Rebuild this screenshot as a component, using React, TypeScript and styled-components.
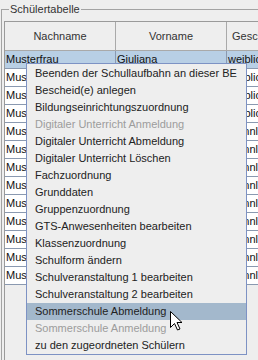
import React from 'react';
import styled, { createGlobalStyle } from 'styled-components';

const Global = createGlobalStyle`
  html, body { margin: 0; padding: 0; background: #eeeeee; overflow: hidden; }
  body { font-family: "Liberation Sans", Arial, sans-serif; font-size: 11px; color: #222; }
`;

const Screen = styled.div`
  position: relative;
  width: 258px;
  height: 360px;
  overflow: hidden;
  background: #eeeeee;
`;

const Group = styled.fieldset`
  margin: 2px 0 0 1px;
  padding: 0 0 0 2px;
  border: 1px solid #a3a3a3;
  border-right: none;
  border-bottom: none;
  height: 360px;
  min-width: 0;
`;

const Legend = styled.legend`
  margin-left: 5px;
  padding: 0 1px;
  font-size: 11px;
  line-height: 14px;
  color: #333;
`;

const ScrollPane = styled.div`
  margin-top: 5px;
  border-left: 1px solid #9a9a9a;
  border-top: 1px solid #9a9a9a;
  height: 400px;
  background: #eeeeee;
`;

const Grid = styled.div`
  display: grid;
  grid-template-columns: 111px 111px 66px;
`;

const HeadCell = styled.div`
  height: 28px;
  border-right: 1px solid #a9a9a9;
  border-bottom: 1px solid #a9a9a9;
  display: flex;
  align-items: center;
  justify-content: center;
  white-space: nowrap;
  color: #333;
  background: #eeeeee;
`;

const Cell = styled.div<{ $sel?: boolean }>`
  height: 17px;
  line-height: 17px;
  padding-left: 1px;
  white-space: nowrap;
  overflow: hidden;
  border-right: 1px solid #8a99b0;
  border-bottom: 1px solid #8a99b0;
  background: ${(p) => (p.$sel ? '#b8cfe5' : '#ffffff')};
  color: #111;
`;

const Menu = styled.div`
  position: absolute;
  left: 26px;
  top: 63px;
  width: 219px;
  border: 1px solid #7d92c4;
  background: #eeeeee;
  padding: 1px 0 0;
`;

const Item = styled.div<{ $disabled?: boolean; $active?: boolean }>`
  height: 17px;
  line-height: 17px;
  padding-left: 8px;
  white-space: nowrap;
  color: ${(p) => (p.$disabled ? '#9c9c9c' : '#222')};
  background: ${(p) => (p.$active ? '#a3b8cc' : 'transparent')};
`;

const Cursor = styled.svg`
  position: absolute;
  left: 170px;
  top: 311px;
`;

const rows = [
  ['Musterfrau', 'Giuliana', 'weiblich'],
  ['Mustermann', 'Anna', 'weiblich'],
  ['Mustermann', 'Berta', 'weiblich'],
  ['Mustermann', 'Clara', 'weiblich'],
  ['Mustermann', 'David', 'männlich'],
  ['Mustermann', 'Emil', 'männlich'],
  ['Mustermann', 'Felix', 'männlich'],
  ['Mustermann', 'Georg', 'männlich'],
  ['Mustermann', 'Hans', 'männlich'],
  ['Mustermann', 'Ivo', 'männlich'],
  ['Mustermann', 'Jan', 'männlich'],
  ['Mustermann', 'Karl', 'männlich'],
  ['Mustermann', 'Lukas', 'männlich'],
];

const items: { t: string; d?: boolean; a?: boolean }[] = [
  { t: 'Beenden der Schullaufbahn an dieser BE' },
  { t: 'Bescheid(e) anlegen' },
  { t: 'Bildungseinrichtungszuordnung' },
  { t: 'Digitaler Unterricht Anmeldung', d: true },
  { t: 'Digitaler Unterricht Abmeldung' },
  { t: 'Digitaler Unterricht Löschen' },
  { t: 'Fachzuordnung' },
  { t: 'Grunddaten' },
  { t: 'Gruppenzuordnung' },
  { t: 'GTS-Anwesenheiten bearbeiten' },
  { t: 'Klassenzuordnung' },
  { t: 'Schulform ändern' },
  { t: 'Schulveranstaltung 1 bearbeiten' },
  { t: 'Schulveranstaltung 2 bearbeiten' },
  { t: 'Sommerschule Abmeldung', a: true },
  { t: 'Sommerschule Anmeldung', d: true },
  { t: 'zu den zugeordneten Schülern' },
];

export default function App() {
  return (
    <Screen>
      <Global />
      <Group>
        <Legend>Schülertabelle</Legend>
        <ScrollPane>
          <Grid>
            <HeadCell>Nachname</HeadCell>
            <HeadCell>Vorname</HeadCell>
            <HeadCell>Geschlecht</HeadCell>
            {rows.map((r, i) =>
              r.map((c, j) => (
                <Cell key={`${i}-${j}`} $sel={i === 0}>
                  {c}
                </Cell>
              ))
            )}
          </Grid>
        </ScrollPane>
      </Group>
      <Menu>
        {items.map((it) => (
          <Item key={it.t} $disabled={it.d} $active={it.a}>
            {it.t}
          </Item>
        ))}
      </Menu>
      <Cursor width="13" height="20" viewBox="0 0 13 20">
        <path d="M0.5 0.5 L0.5 16.5 L4.5 12.5 L7.5 19 L10 18 L7 11.5 L12 11.5 Z" fill="#fff" stroke="#000" strokeWidth="1" strokeLinejoin="miter" />
      </Cursor>
    </Screen>
  );
}
